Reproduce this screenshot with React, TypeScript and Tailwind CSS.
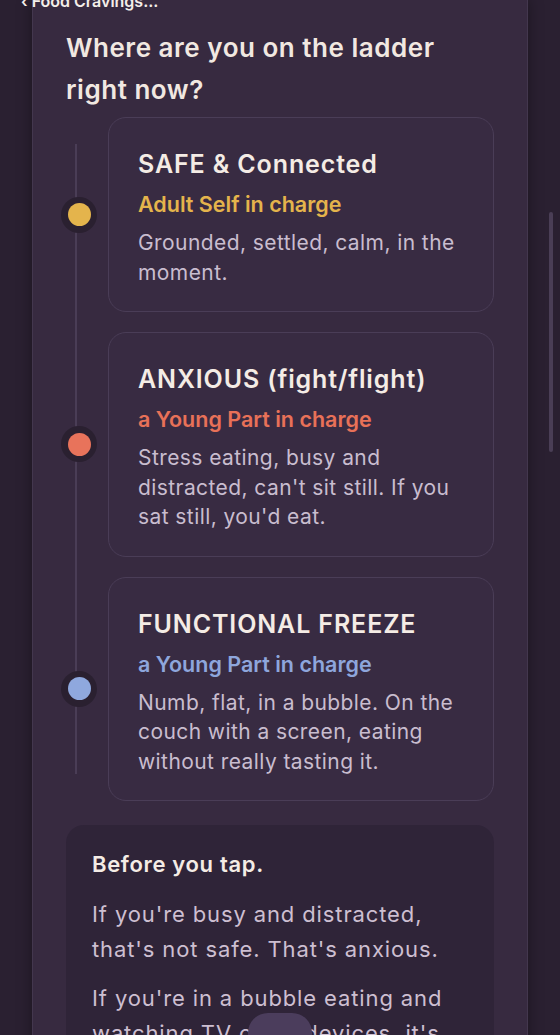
import React from "react";

type Rung = {
  title: string;
  who: string;
  whoColor: string;
  dotColor: string;
  text: string;
};

const rungs: Rung[] = [
  {
    title: "SAFE & Connected",
    who: "Adult Self in charge",
    whoColor: "text-[#e4b44c]",
    dotColor: "bg-[#e4b44c]",
    text: "Grounded, settled, calm, in the moment.",
  },
  {
    title: "ANXIOUS (fight/flight)",
    who: "a Young Part in charge",
    whoColor: "text-[#e87158]",
    dotColor: "bg-[#e8735b]",
    text: "Stress eating, busy and distracted, can't sit still. If you sat still, you'd eat.",
  },
  {
    title: "FUNCTIONAL FREEZE",
    who: "a Young Part in charge",
    whoColor: "text-[#8ea6dc]",
    dotColor: "bg-[#8fa8de]",
    text: "Numb, flat, in a bubble. On the couch with a screen, eating without really tasting it.",
  },
];

export default function App() {
  return (
    <div className="relative h-[1035px] w-[560px] overflow-hidden bg-[#2a2031] font-['Inter',sans-serif]">
      {/* back link, mostly scrolled off */}
      <div className="h-[8px] pl-[21px]">
        <div className="-mt-[9px] text-[16px] font-semibold leading-[20px] text-[#f4eee9]">‹ Food Cravings...</div>
      </div>

      <div className="mx-[32px] min-h-[1100px] border-x border-[#43374e] bg-[#372a40] pl-[33px] pr-[33px] pt-[28px] shadow-[0_0_14px_rgba(0,0,0,0.35)]">
        <h2 className="text-[26px] font-semibold leading-[42px] tracking-[0.02em] text-[#f1e8e1]">
          Where are you on the ladder right now?
        </h2>

        {/* ladder */}
        <div className="relative mt-[6px] flex flex-col gap-5">
          <div className="absolute bottom-[27px] left-[9px] top-[27px] w-[2px] bg-[#4a3d56]" />
          {rungs.map((r) => (
            <div key={r.title} className="flex items-center gap-[16px]">
              <div className="relative flex w-[26px] shrink-0 justify-center">
                <div className="flex h-[36px] w-[36px] shrink-0 items-center justify-center rounded-full bg-[#2a2030]">
                  <div className={`h-[23px] w-[23px] rounded-full ${r.dotColor}`} />
                </div>
              </div>
              <div className="flex-1 rounded-[18px] border border-[#4a3d57] bg-[#382b42] pb-[24px] pl-[29px] pr-[28px] pt-[30px]">
                <div className="text-[25px] font-semibold leading-[32px] tracking-[0.035em] text-[#f4ece5]">{r.title}</div>
                <div className={`mt-[10px] text-[21.5px] font-semibold leading-[28px] ${r.whoColor}`}>{r.who}</div>
                <p className="mt-[10px] text-[21px] leading-[29.5px] tracking-[0.02em] text-[#c9bdcf]">{r.text}</p>
              </div>
            </div>
          ))}
        </div>

        {/* note */}
        <div className="mt-[24px] rounded-[18px] bg-[#2f2438] px-[26px] pb-[26px] pt-[25px]">
          <div className="text-[22px] font-semibold leading-[28px] tracking-[0.03em] text-[#f4ece5]">Before you tap.</div>
          <p className="mt-[19px] text-[22px] leading-[35px] tracking-[0.04em] text-[#cdbfd1]">
            If you're busy and distracted, that's not safe. That's anxious.
          </p>
          <p className="mt-[14px] text-[22px] leading-[35px] tracking-[0.04em] text-[#cdbfd1]">
            If you're in a bubble eating and watching TV or on devices, it's freeze.
          </p>
        </div>
      </div>

      {/* scrollbar */}
      <div className="absolute left-[549px] top-[212px] h-[240px] w-[4px] rounded-full bg-[#4a3e56]" />
      {/* floating pill */}
      <div className="absolute left-[248px] top-[1013px] h-[40px] w-[64px] rounded-[20px] bg-[#4b3d5c]" />
    </div>
  );
}
